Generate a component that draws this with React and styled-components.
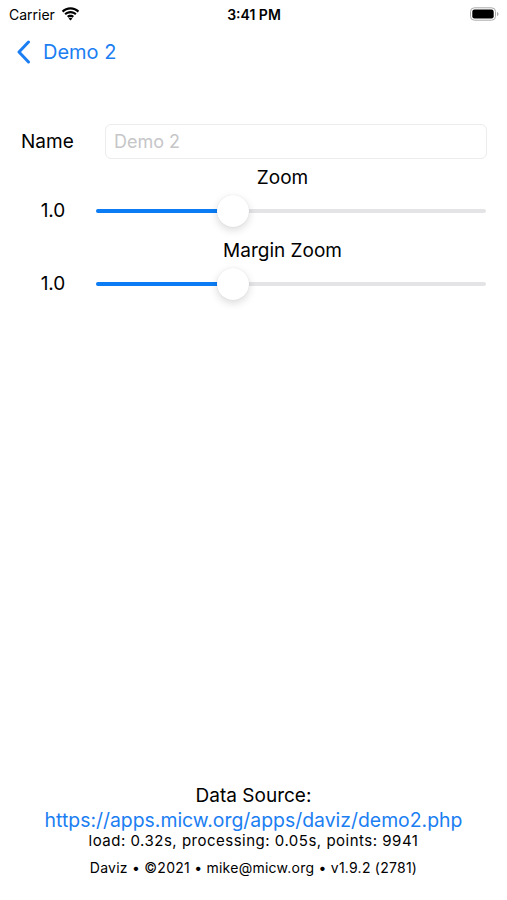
import React from 'react';
import styled, { createGlobalStyle } from 'styled-components';

const GlobalStyle = createGlobalStyle`
  html, body {
    margin: 0;
    padding: 0;
    background: #ffffff;
  }
  body {
    font-family: Inter, "Liberation Sans", sans-serif;
    color: #000;
  }
`;

const Screen = styled.div`
  width: 507px;
  height: 900px;
  display: flex;
  flex-direction: column;
  background: #fff;
`;

const StatusBar = styled.div`
  height: 28px;
  display: grid;
  grid-template-columns: 1fr auto 1fr;
  align-items: center;
  padding: 0 8px 0 9px;
  font-size: 14px;
`;

const Carrier = styled.div`
  display: flex;
  align-items: center;
  gap: 6px;
`;

const Clock = styled.div`
  font-weight: 600;
`;

const Battery = styled.div`
  justify-self: end;
  display: flex;
  align-items: center;
`;

const NavBar = styled.div`
  height: 48px;
  display: flex;
  align-items: center;
  gap: 12px;
  padding: 0 0 0 16px;
  color: #1b7ef2;
  font-size: 20px;
`;

const Form = styled.div`
  padding: 48px 20px 0 20px;
  display: flex;
  flex-direction: column;
`;

const FieldRow = styled.div`
  display: flex;
  align-items: center;
  gap: 22px;
  margin-left: 1px;
`;

const FieldLabel = styled.label`
  font-size: 19px;
  width: 62px;
`;

const TextField = styled.input`
  flex: 1;
  height: 35px;
  box-sizing: border-box;
  border: 1px solid #ececee;
  border-radius: 6px;
  padding: 0 8px;
  font-family: inherit;
  font-size: 18px;
  outline: none;
  &::placeholder {
    color: #c6c6c8;
  }
`;

const SliderGroup = styled.div`
  display: flex;
  flex-direction: column;
`;

const SliderTitle = styled.div`
  font-size: 19px;
  text-align: center;
  padding-left: 58px;
  height: 23px;
  line-height: 23px;
  margin-top: ${(p) => p.$top}px;
`;

const SliderRow = styled.div`
  display: flex;
  align-items: center;
  height: 43px;
`;

const SliderValue = styled.div`
  width: 66px;
  margin-right: 10px;
  text-align: center;
  font-size: 19px;
`;

const Track = styled.div`
  position: relative;
  flex: 1;
  height: 4px;
  border-radius: 2px;
  background: #e4e4e6;
  margin-right: 1px;
`;

const Fill = styled.div`
  height: 100%;
  border-radius: 2px;
  background: #0b7cf4;
`;

const Thumb = styled.div`
  position: absolute;
  top: 50%;
  width: 32px;
  height: 32px;
  border-radius: 50%;
  background: #fff;
  transform: translate(-50%, -50%);
  box-shadow: 0 3px 8px rgba(0, 0, 0, 0.15), 0 0 1px rgba(0, 0, 0, 0.12);
`;

const Spacer = styled.div`
  flex: 1;
`;

const Footer = styled.div`
  display: flex;
  flex-direction: column;
  align-items: center;
  padding-bottom: 23px;
`;

const SourceTitle = styled.div`
  font-size: 19px;
  line-height: 24px;
`;

const SourceLink = styled.a`
  font-size: 19.4px;
  line-height: 24px;
  color: #1b7ef2;
  text-decoration: none;
`;

const Stats = styled.div`
  font-size: 15px;
  letter-spacing: 0.5px;
  line-height: 18px;
`;

const Credits = styled.div`
  font-size: 14px;
  letter-spacing: 0.25px;
  line-height: 18px;
  margin-top: 9px;
`;

function Slider({ title, value, percent, top }) {
  return (
    <SliderGroup>
      <SliderTitle $top={top}>{title}</SliderTitle>
      <SliderRow>
        <SliderValue>{value}</SliderValue>
        <Track>
          <Fill style={{ width: `${percent}%` }} />
          <Thumb style={{ left: `${percent}%` }} />
        </Track>
      </SliderRow>
    </SliderGroup>
  );
}

export default function App() {
  return (
    <>
      <GlobalStyle />
      <Screen>
        <StatusBar>
          <Carrier>
            Carrier
            <svg width="19" height="14" viewBox="0 0 19 14">
              <path d="M9.5 2.5c2.8 0 5.3 1.1 7.2 2.9l1.5-1.6C15.9 1.6 12.9.3 9.5.3S3.1 1.6.8 3.8l1.5 1.6c1.9-1.8 4.4-2.9 7.2-2.9z" fill="#000" />
              <path d="M9.5 6.3c1.8 0 3.4.7 4.6 1.8l1.5-1.6C14 5 11.9 4.1 9.5 4.1S5 5 3.4 6.5l1.5 1.6c1.2-1.1 2.8-1.8 4.6-1.8z" fill="#000" />
              <path d="M9.5 9.9c.8 0 1.5.3 2 .8l1.5-1.6c-.9-.9-2.1-1.4-3.5-1.4S6.9 8.2 6 9.1l1.5 1.6c.5-.5 1.2-.8 2-.8z" fill="#000" />
              <path d="M9.5 13.6l1.9-2c-.5-.5-1.2-.8-1.9-.8s-1.4.3-1.9.8z" fill="#000" />
            </svg>
          </Carrier>
          <Clock>3:41 PM</Clock>
          <Battery>
            <svg width="29" height="14" viewBox="0 0 29 14">
              <rect x="0.5" y="0.8" width="25" height="12.4" rx="3.8" fill="none" stroke="#aaa" strokeWidth="1" />
              <rect x="2.3" y="2.6" width="21.4" height="8.8" rx="2.2" fill="#000" />
              <path d="M27 5v4c.9-.3 1.5-1.1 1.5-2s-.6-1.7-1.5-2z" fill="#aaa" />
            </svg>
          </Battery>
        </StatusBar>
        <NavBar>
          <svg width="15" height="24" viewBox="0 0 15 24">
            <path d="M12.5 2L3 12l9.5 10" fill="none" stroke="#1b7ef2" strokeWidth="3" strokeLinecap="round" strokeLinejoin="round" />
          </svg>
          <span>Demo 2</span>
        </NavBar>
        <Form>
          <FieldRow>
            <FieldLabel>Name</FieldLabel>
            <TextField placeholder="Demo 2" />
          </FieldRow>
          <Slider title="Zoom" value="1.0" percent={35} top={7} />
          <Slider title="Margin Zoom" value="1.0" percent={35} top={7} />
        </Form>
        <Spacer />
        <Footer>
          <SourceTitle>Data Source:</SourceTitle>
          <SourceLink href="#">https://apps.micw.org/apps/daviz/demo2.php</SourceLink>
          <Stats>load: 0.32s, processing: 0.05s, points: 9941</Stats>
          <Credits>Daviz • ©2021 • mike@micw.org • v1.9.2 (2781)</Credits>
        </Footer>
      </Screen>
    </>
  );
}
